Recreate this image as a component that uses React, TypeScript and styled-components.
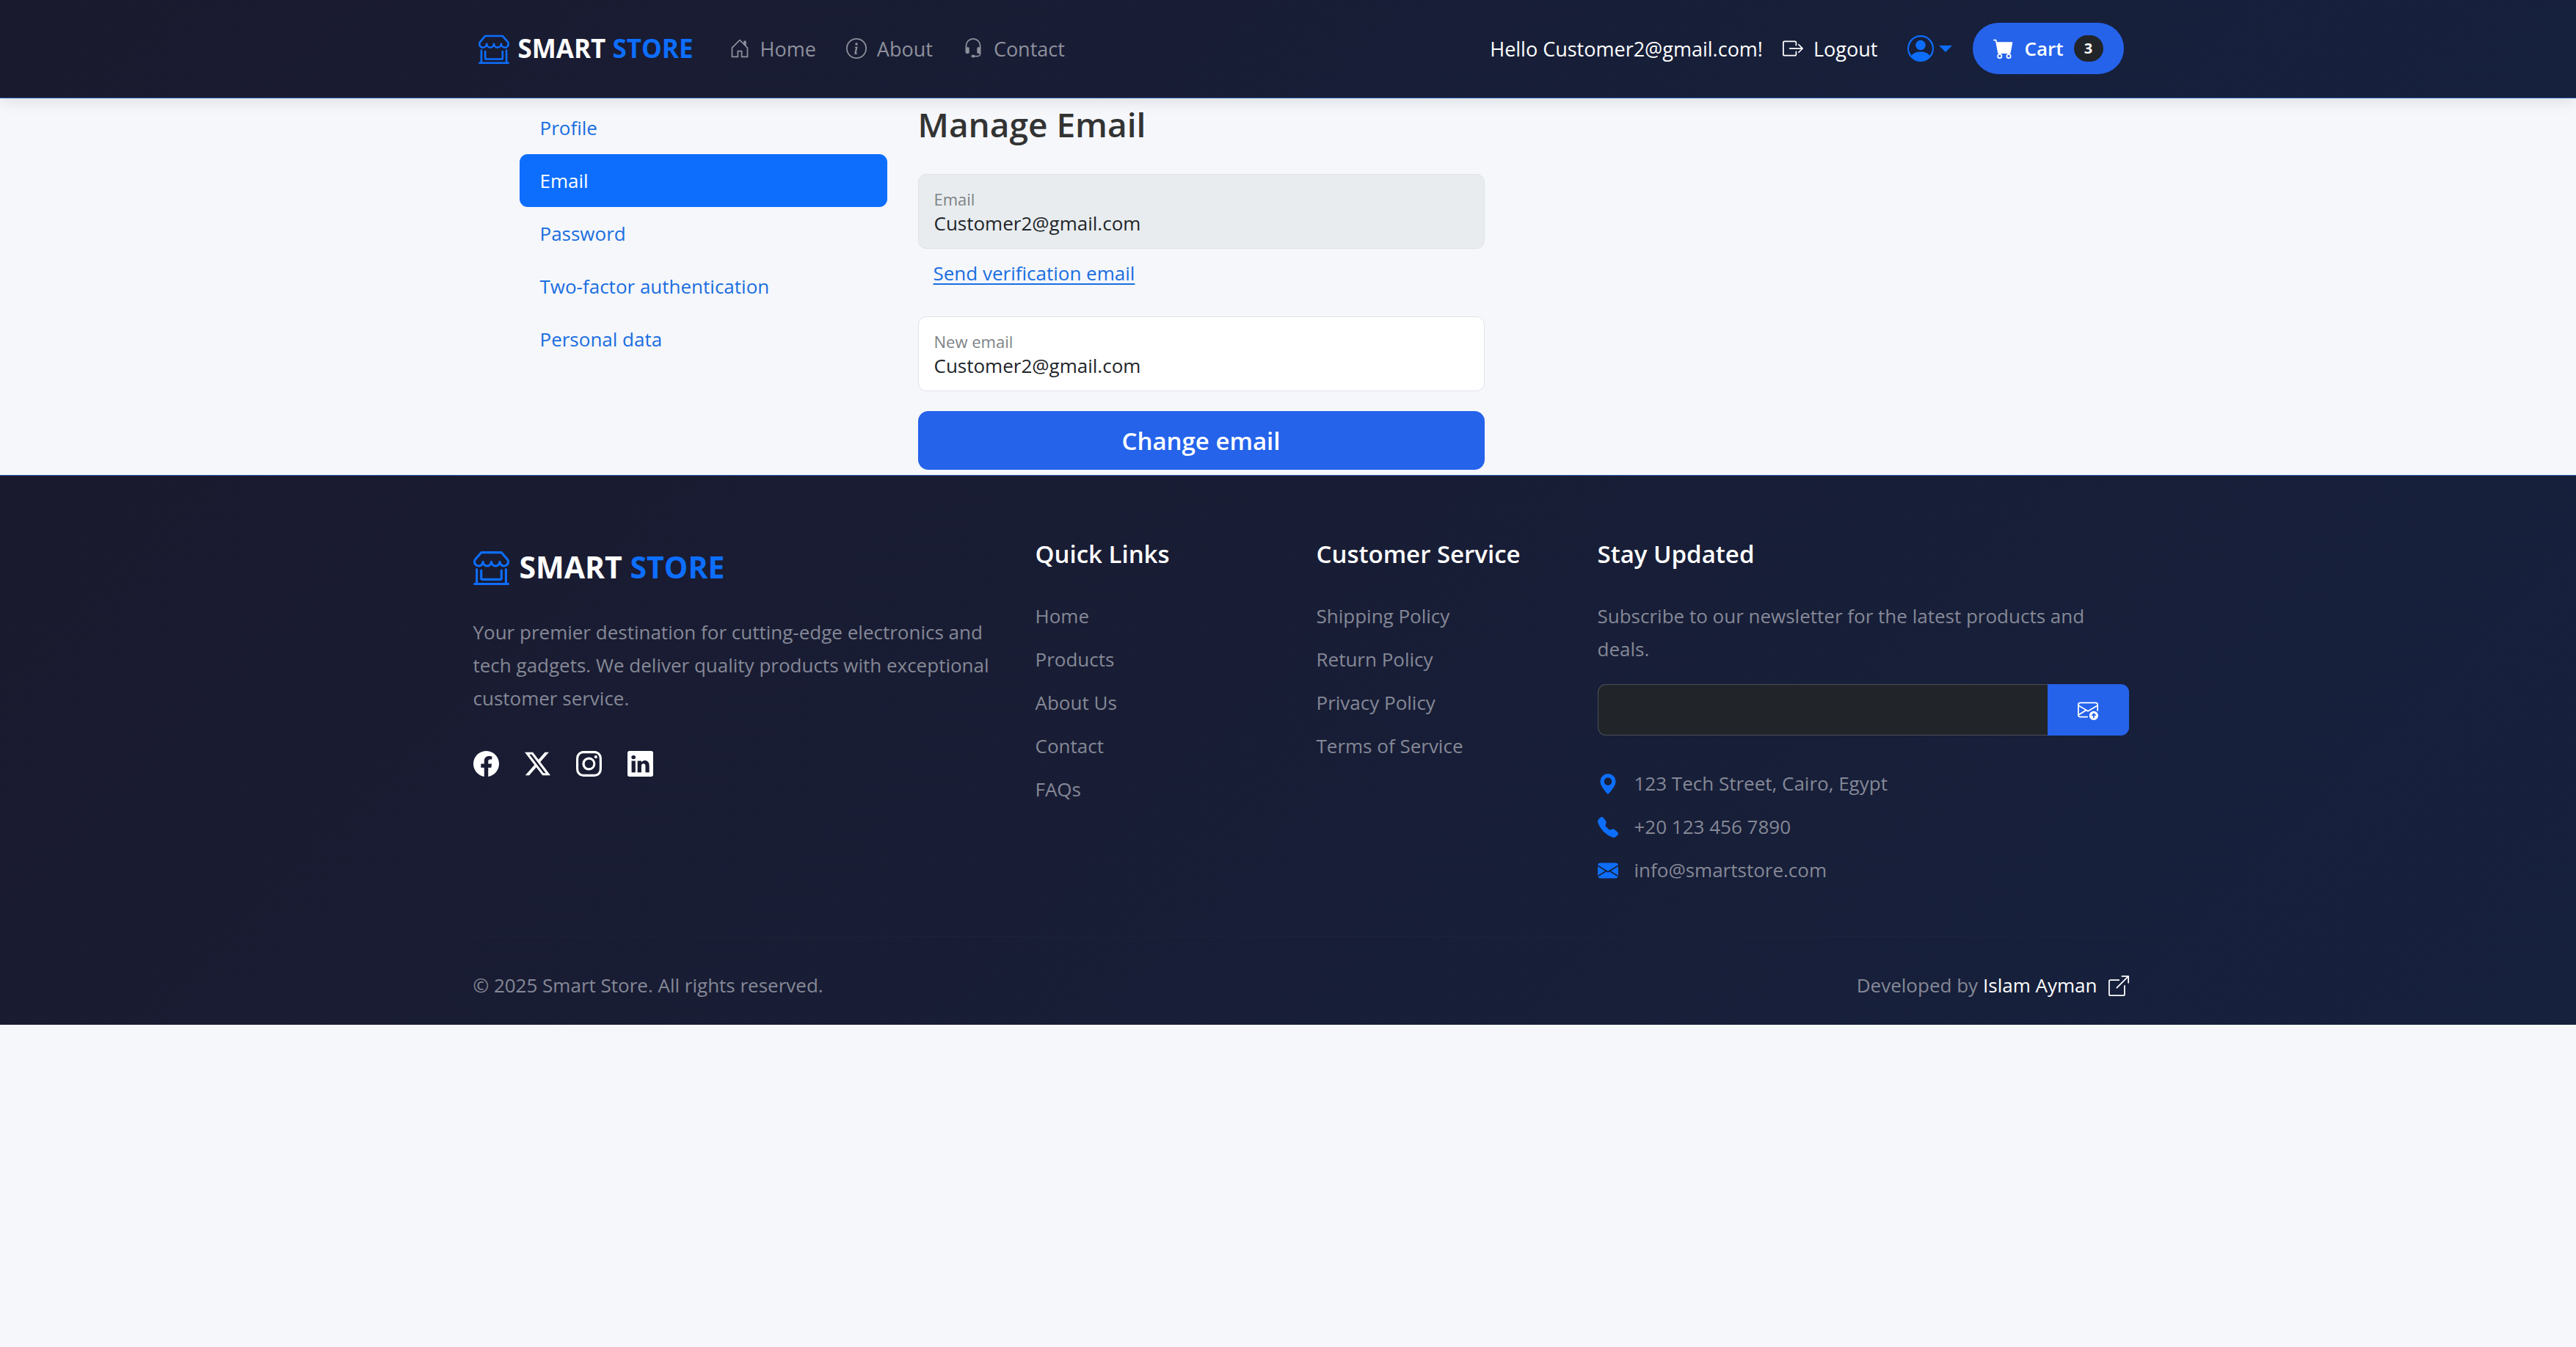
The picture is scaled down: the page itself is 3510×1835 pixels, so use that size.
import React from "react";
import styled, { createGlobalStyle, css } from "styled-components";
import {
  BsShopWindow, BsHouseDoor, BsInfoCircle, BsHeadset, BsBoxArrowRight, BsPersonCircle, BsCartFill,
  BsFacebook, BsTwitterX, BsInstagram, BsLinkedin, BsEnvelopeArrowUp, BsGeoAltFill, BsTelephoneFill,
  BsEnvelopeFill, BsBoxArrowUpRight,
} from "react-icons/bs";

const bar = "linear-gradient(135deg, #1a1a2e 0%, #16213e 100%)";

const GlobalStyle = createGlobalStyle`
  * { box-sizing: border-box; }
  body {
    margin: 0;
    background: #f5f7fb;
    color: #212529;
    font-family: "Open Sans", "Noto Sans", sans-serif;
    font-size: 26px;
    line-height: 45px;
  }
  h2, h5, p, ul { margin: 0; padding: 0; }
  ul { list-style: none; }
  a { color: inherit; text-decoration: none; }
  button, input { font: inherit; }
  svg { flex: none; display: block; }
`;

const Header = styled.header`
  position: relative;
  background: ${bar};
  border-bottom: 1px solid #2f5fae;
  box-shadow: 0 4px 20px rgba(0, 0, 0, 0.1);
  padding: 31px 0 32px;
  font-size: 27px;
`;

const Container = styled.div`
  width: 100%;
  max-width: 2291px;
  margin: 0 auto;
  padding-left: 35px;
`;

const NavBar = styled(Container)`
  display: flex;
  align-items: center;
  padding: 0 7px 0 42px;
`;

const Brand = styled.a<{ $large?: boolean }>`
  display: flex;
  align-items: center;
  gap: ${(p) => (p.$large ? 14 : 12)}px;
  color: #fff;
  font-weight: 700;
  font-size: ${(p) => (p.$large ? 41 : 35)}px;
  line-height: ${(p) => (p.$large ? 80 : 70)}px;
  svg { color: #0d6efd; font-size: ${(p) => (p.$large ? 49 : 42)}px; }
  em { color: #0d6efd; font-style: normal; }
`;

const NavLinks = styled.nav`
  display: flex;
  gap: 41px;
  margin-left: 49px;
  color: #8e909c;
`;

const IconLink = styled.a`
  display: flex;
  align-items: center;
  gap: 14px;
  svg { font-size: 28px; }
`;

const Account = styled.div`
  display: flex;
  align-items: center;
  margin-left: auto;
  color: #fff;
`;

const PlainButton = styled.button`
  display: flex;
  align-items: center;
  gap: 14px;
  margin-left: 27px;
  padding: 0;
  border: 0;
  background: none;
  color: inherit;
  svg { font-size: 28px; }
`;

const UserMenu = styled(PlainButton)`
  gap: 7px;
  margin-left: 41px;
  color: #0d6efd;
  svg { font-size: 36px; }
  &::after {
    content: "";
    border-top: 9px solid;
    border-left: 9px solid transparent;
    border-right: 9px solid transparent;
  }
`;

const CartButton = styled(PlainButton)`
  height: 70px;
  margin-left: 28px;
  padding: 0 28px;
  border-radius: 35px;
  background: #2563eb;
  font-size: 26px;
  font-weight: 600;
`;

const Badge = styled.span`
  display: grid;
  place-items: center;
  width: 40px;
  height: 36px;
  border-radius: 18px;
  background: #212529;
  font-size: 20px;
  font-weight: 700;
  line-height: 36px;
`;

const Main = styled(Container)`
  display: grid;
  grid-template-columns: 501px 772px;
  gap: 42px;
  padding: 4px 0 7px 98px;
`;

const SideNav = styled.nav`
  display: flex;
  flex-direction: column;
`;

const SideLink = styled.a<{ $active?: boolean }>`
  padding: 14px 28px;
  border-radius: 11px;
  color: #1a6ee0;
  line-height: 44px;
  ${(p) => p.$active && css`background: #0d6efd; color: #fff;`}
`;

const Form = styled.form`
  display: flex;
  flex-direction: column;
`;

const Title = styled.h2`
  margin-bottom: 37px;
  color: #333;
  font-size: 46px;
  font-weight: 600;
  line-height: 62px;
`;

const Field = styled.div<{ $muted?: boolean }>`
  display: flex;
  flex-direction: column;
  height: 102px;
  padding: 19px 21px 0;
  border: 1px solid #dfe3e7;
  border-radius: 11px;
  background: ${(p) => (p.$muted ? "#e8ecef" : "#fff")};
  label { color: #7d8286; font-size: 22px; line-height: 28px; }
  input {
    width: 100%;
    height: 38px;
    padding: 0;
    border: 0;
    outline: 0;
    background: none;
    color: #212529;
  }
`;

const VerifyButton = styled.button`
  align-self: flex-start;
  margin: 11px 0 36px;
  padding: 0 21px;
  border: 0;
  background: none;
  color: #1a6ee0;
  text-decoration: underline;
  text-decoration-thickness: 2px;
  text-underline-offset: 4px;
`;

const SubmitButton = styled.button`
  height: 80px;
  margin-top: 27px;
  border: 0;
  border-radius: 14px;
  background: #2563eb;
  color: #fff;
  font-size: 33px;
  font-weight: 600;
`;

const Footer = styled.footer`
  background: ${bar};
  border-top: 1px solid #2f5fae;
  padding: 84px 0 31px;
  color: #858896;
`;

const Columns = styled(Container)`
  display: grid;
  grid-template-columns: repeat(12, 1fr);
  gap: 42px;
`;

const Column = styled.section<{ $span: number }>`
  grid-column: span ${(p) => p.$span};
  ul { display: grid; gap: 14px; }
`;

const Heading = styled.h5`
  margin-bottom: 40px;
  color: #fff;
  font-size: 33px;
  font-weight: 600;
  line-height: 45px;
`;

const About = styled.p`
  margin: 27px 0 49px;
`;

const Social = styled.div`
  display: flex;
  gap: 35px;
  color: #fff;
  font-size: 35px;
`;

const Newsletter = styled.form`
  display: flex;
  height: 70px;
  margin: 25px 0 43px;
  input {
    flex: 1;
    min-width: 0;
    padding: 0 21px;
    border: 1px solid #495057;
    border-right: 0;
    border-radius: 11px 0 0 11px;
    background: #212529;
    color: #fff;
  }
  button {
    display: grid;
    place-items: center;
    width: 111px;
    border: 0;
    border-radius: 0 11px 11px 0;
    background: #2563eb;
    color: #fff;
    font-size: 28px;
  }
`;

const ContactItem = styled.li`
  display: flex;
  align-items: center;
  gap: 22px;
  svg { color: #0d6efd; font-size: 28px; }
`;

const Bottom = styled.div`
  display: flex;
  justify-content: space-between;
  margin-top: 67px;
  padding-top: 44px;
  border-top: 1px solid rgba(255, 255, 255, 0.02);
`;

const Credit = styled.p`
  display: flex;
  gap: 7px;
  a { gap: 15px; color: #fff; }
`;

const quickLinks = ["Home", "Products", "About Us", "Contact", "FAQs"];
const serviceLinks = ["Shipping Policy", "Return Policy", "Privacy Policy", "Terms of Service"];
const accountPages = ["Profile", "Email", "Password", "Two-factor authentication", "Personal data"];
const socials = [
  { label: "Facebook", Icon: BsFacebook },
  { label: "X", Icon: BsTwitterX },
  { label: "Instagram", Icon: BsInstagram },
  { label: "LinkedIn", Icon: BsLinkedin },
];

function Logo({ large }: { large?: boolean }) {
  return (
    <Brand href="#" $large={large}>
      <BsShopWindow />
      <span>SMART <em>STORE</em></span>
    </Brand>
  );
}

function LinkList({ title, items }: { title: string; items: string[] }) {
  return (
    <Column $span={2}>
      <Heading>{title}</Heading>
      <ul>{items.map((item) => <li key={item}><a href="#">{item}</a></li>)}</ul>
    </Column>
  );
}

export default function App() {
  return (
    <>
      <GlobalStyle />
      <Header>
        <NavBar>
          <Logo />
          <NavLinks>
            <IconLink href="#"><BsHouseDoor />Home</IconLink>
            <IconLink href="#"><BsInfoCircle />About</IconLink>
            <IconLink href="#"><BsHeadset />Contact</IconLink>
          </NavLinks>
          <Account>
            <a href="#">Hello Customer2@gmail.com!</a>
            <PlainButton type="button"><BsBoxArrowRight />Logout</PlainButton>
            <UserMenu type="button" aria-label="Account menu"><BsPersonCircle /></UserMenu>
            <CartButton type="button"><BsCartFill />Cart<Badge>3</Badge></CartButton>
          </Account>
        </NavBar>
      </Header>

      <Main as="main">
        <SideNav>
          {accountPages.map((page) => (
            <SideLink key={page} href="#" $active={page === "Email"}>{page}</SideLink>
          ))}
        </SideNav>
        <Form>
          <Title>Manage Email</Title>
          <Field $muted>
            <label htmlFor="email">Email</label>
            <input id="email" type="email" disabled defaultValue="Customer2@gmail.com" />
          </Field>
          <VerifyButton type="button">Send verification email</VerifyButton>
          <Field>
            <label htmlFor="new-email">New email</label>
            <input id="new-email" type="email" defaultValue="Customer2@gmail.com" />
          </Field>
          <SubmitButton type="button">Change email</SubmitButton>
        </Form>
      </Main>

      <Footer>
        <Columns>
          <Column $span={4}>
            <Logo large />
            <About>
              Your premier destination for cutting-edge electronics and tech gadgets. We deliver
              quality products with exceptional customer service.
            </About>
            <Social>
              {socials.map(({ label, Icon }) => <a key={label} href="#" aria-label={label}><Icon /></a>)}
            </Social>
          </Column>
          <LinkList title="Quick Links" items={quickLinks} />
          <LinkList title="Customer Service" items={serviceLinks} />
          <Column $span={4}>
            <Heading>Stay Updated</Heading>
            <p>Subscribe to our newsletter for the latest products and deals.</p>
            <Newsletter>
              <input type="email" aria-label="Email address" />
              <button type="button" aria-label="Subscribe"><BsEnvelopeArrowUp /></button>
            </Newsletter>
            <ul>
              <ContactItem><BsGeoAltFill />123 Tech Street, Cairo, Egypt</ContactItem>
              <ContactItem><BsTelephoneFill />+20 123 456 7890</ContactItem>
              <ContactItem><BsEnvelopeFill />info@smartstore.com</ContactItem>
            </ul>
          </Column>
        </Columns>
        <Container>
          <Bottom>
            <p>© 2025 Smart Store. All rights reserved.</p>
            <Credit>Developed by <IconLink href="#">Islam Ayman<BsBoxArrowUpRight /></IconLink></Credit>
          </Bottom>
        </Container>
      </Footer>
    </>
  );
}
